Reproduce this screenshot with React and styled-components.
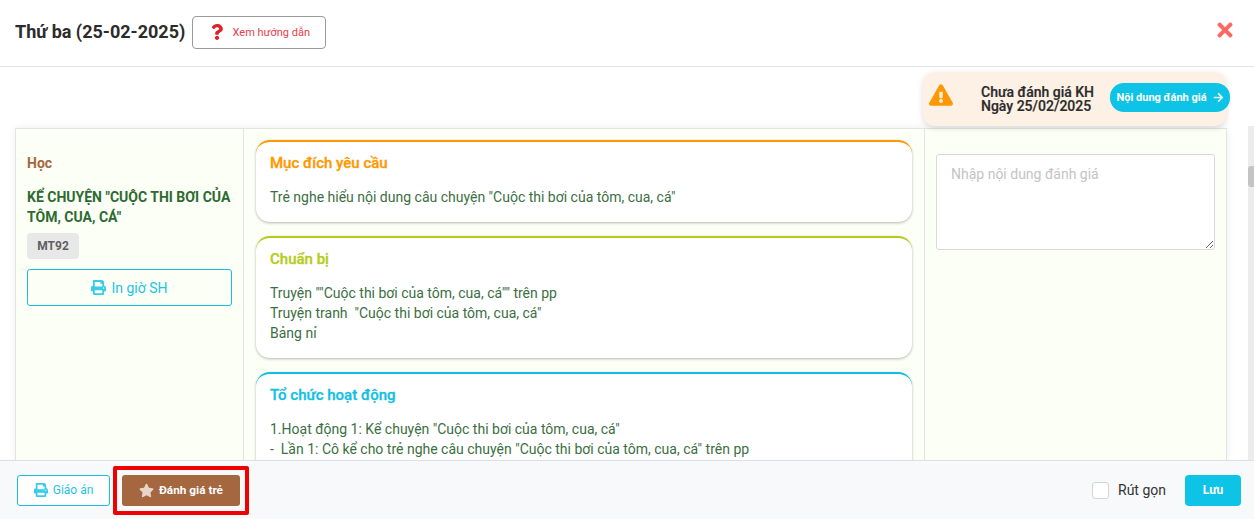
import React from 'react';
import styled, { createGlobalStyle } from 'styled-components';
import {
  FaArrowRight,
  FaExclamationTriangle,
  FaPrint,
  FaQuestion,
  FaStar,
  FaTimes
} from 'react-icons/fa';

const GlobalStyle = createGlobalStyle`
  html, body {
    margin: 0;
    height: 100%;
    overflow: hidden;
    background: #fff;
  }
  * {
    box-sizing: border-box;
  }
`;

const Modal = styled.div`
  width: 1254px;
  height: 519px;
  display: flex;
  flex-direction: column;
  font-family: Roboto, 'Liberation Sans', sans-serif;
  color: #2b2b2b;
  overflow: hidden;
`;

const Header = styled.header`
  height: 67px;
  flex: none;
  display: flex;
  align-items: center;
  padding: 0 18px 2px 15px;
  border-bottom: 1px solid #e2e2e2;
`;

const Title = styled.h1`
  margin: 0 7px 0 0;
  font-size: 18px;
  font-weight: 700;
  line-height: 24px;
`;

const GuideButton = styled.button`
  width: 134px;
  height: 33px;
  display: flex;
  align-items: center;
  justify-content: center;
  gap: 8px;
  padding: 0;
  background: #fff;
  border: 1px solid #9a9a9a;
  border-radius: 4px;
  color: #e8404a;
  font-family: inherit;
  font-size: 11px;
  svg {
    color: #e0202c;
    font-size: 16px;
  }
`;

const CloseButton = styled.span`
  margin-left: auto;
  margin-bottom: 4px;
  display: flex;
  color: #fb6a62;
  font-size: 22px;
`;

const NoticeBar = styled.div`
  height: 61px;
  flex: none;
  position: relative;
`;

const Notice = styled.div`
  position: absolute;
  z-index: 2;
  top: 5px;
  left: 923px;
  width: 303px;
  height: 54px;
  display: flex;
  align-items: center;
  padding-left: 6px;
  background: #fdf1e6;
  border-radius: 12px;
  box-shadow: 0 2px 6px rgba(0, 0, 0, 0.14);
  svg.warn {
    color: #ff9800;
    font-size: 24px;
    flex: none;
    margin-bottom: 8px;
  }
`;

const NoticeText = styled.div`
  margin-left: 28px;
  width: 129px;
  font-size: 14px;
  font-weight: 500;
  -webkit-text-stroke: 0.2px #2b2b2b;
  line-height: 14.5px;
`;

const NoticeLink = styled.button`
  position: absolute;
  left: 187px;
  top: 11px;
  width: 120px;
  height: 29px;
  display: flex;
  align-items: center;
  justify-content: center;
  gap: 6px;
  padding: 0;
  border: 0;
  border-radius: 14px;
  background: #0dc3e6;
  color: #fff;
  font-family: inherit;
  font-size: 11px;
  font-weight: 700;
  white-space: nowrap;
  svg {
    font-size: 11px;
    opacity: 0.85;
  }
`;

const Body = styled.div`
  flex: 1;
  min-height: 0;
  display: flex;
  position: relative;
`;

const Grid = styled.div`
  margin-left: 15px;
  width: 1212px;
  height: 332px;
  display: grid;
  grid-template-columns: 227px 681px 1fr;
  background: #fcfff5;
  border: 1px solid #e4e6dc;
  border-bottom: 0;
  box-shadow: 0 0 8px rgba(0, 0, 0, 0.07);
  overflow: hidden;
`;

const Column = styled.div`
  padding: ${p => p.$padding};
  border-left: ${p => (p.$divided ? '1px solid #e4e6dc' : '0')};
  min-width: 0;
`;

const LessonHeading = styled.h3`
  margin: 0 0 14px;
  color: #a5673f;
  font-size: 14px;
  font-weight: 700;
  line-height: 20px;
`;

const LessonName = styled.div`
  color: #2d6a33;
  font-size: 14px;
  font-weight: 700;
  line-height: 20px;
`;

const Code = styled.span`
  display: block;
  width: 52px;
  height: 26px;
  margin: 6px 0 10px;
  background: #e8e8e8;
  border-radius: 4px;
  color: #5f5f5f;
  font-size: 12px;
  font-weight: 700;
  line-height: 26px;
  text-align: center;
`;

const OutlineButton = styled.button`
  width: ${p => p.$width};
  height: ${p => p.$height};
  display: flex;
  align-items: center;
  justify-content: center;
  gap: 5px;
  padding: 0;
  background: ${p => p.$bg};
  border: 1px solid #16bfe0;
  border-radius: 3px;
  color: #1fc3e6;
  font-family: inherit;
  font-size: ${p => p.$size};
  svg {
    color: #38cbea;
    font-size: ${p => p.$icon};
  }
`;

const Card = styled.section`
  background: #fff;
  border-top: 2px solid ${p => p.$accent};
  border-radius: 14px;
  box-shadow: 0 1px 3px rgba(0, 0, 0, 0.28);
  padding: 11px 14px 15px;
  margin-bottom: 14px;
`;

const CardTitle = styled.h4`
  margin: 0 0 14px;
  color: ${p => p.$accent};
  font-size: 15px;
  font-weight: 500;
  -webkit-text-stroke: 0.3px ${p => p.$accent};
  line-height: 20px;
`;

const CardText = styled.div`
  color: #3b6f42;
  font-size: 14px;
  line-height: 20px;
  white-space: pre-wrap;
`;

const ReviewInput = styled.textarea`
  display: block;
  width: 279px;
  height: 96px;
  padding: 9px 14px;
  border: 1px solid #d9d9d9;
  border-radius: 3px;
  background: #fff;
  font-family: inherit;
  font-size: 14px;
  line-height: 20px;
  &::placeholder {
    color: #c4c4c4;
    opacity: 1;
  }
`;

const ScrollTrack = styled.div`
  position: absolute;
  right: 0;
  top: -2px;
  bottom: 0;
  width: 6px;
  background: #ececec;
`;

const ScrollThumb = styled.div`
  position: absolute;
  top: 40px;
  left: 0;
  width: 6px;
  height: 21px;
  background: #c4c4c4;
  border-radius: 3px 0 0 3px;
`;

const Footer = styled.footer`
  height: 59px;
  flex: none;
  display: flex;
  align-items: center;
  gap: 3px;
  padding: 0 13px 0 17px;
  background: #f8f9fb;
  border-top: 1px solid #dedfe2;
  position: relative;
  z-index: 1;
`;

const Highlight = styled.div`
  padding: 5px;
  border: 4px solid #f00000;
  border-radius: 2px;
`;

const StarButton = styled.button`
  width: 118px;
  height: 31px;
  display: flex;
  align-items: center;
  justify-content: center;
  gap: 5px;
  padding: 0;
  border: 0;
  border-radius: 3px;
  background: #a5673f;
  color: #fff;
  font-family: inherit;
  font-size: 11.8px;
  font-weight: 700;
  svg {
    color: #e8d5c9;
    font-size: 15px;
  }
`;

const CollapseLabel = styled.label`
  margin-left: auto;
  display: flex;
  align-items: center;
  gap: 9px;
  color: #333;
  font-size: 14px;
`;

const CheckBox = styled.span`
  width: 17px;
  height: 17px;
  background: #fff;
  border: 1px solid #d4d4d4;
  border-radius: 3px;
`;

const SaveButton = styled.button`
  width: 56px;
  height: 31px;
  margin-left: 16px;
  padding: 0;
  border: 0;
  border-radius: 4px;
  background: #0dc3e6;
  color: #fff;
  font-family: inherit;
  font-size: 12px;
  font-weight: 700;
`;

const cards = [
  {
    title: 'Mục đích yêu cầu',
    accent: '#ff9800',
    text: 'Trẻ nghe hiểu nội dung câu chuyện "Cuộc thi bơi của tôm, cua, cá"'
  },
  {
    title: 'Chuẩn bị',
    accent: '#b5cc18',
    text: 'Truyện ""Cuộc thi bơi của tôm, cua, cá"" trên pp\nTruyện tranh  "Cuộc thi bơi của tôm, cua, cá"\nBảng nỉ'
  },
  {
    title: 'Tổ chức hoạt động',
    accent: '#12bfe3',
    text: '1.Hoạt động 1: Kể chuyện "Cuộc thi bơi của tôm, cua, cá"\n-  Lần 1: Cô kể cho trẻ nghe câu chuyện "Cuộc thi bơi của tôm, cua, cá" trên pp'
  }
];

export default function App() {
  return (
    <Modal>
      <GlobalStyle />
      <Header>
        <Title>Thứ ba (25-02-2025)</Title>
        <GuideButton>
          <FaQuestion />
          Xem hướng dẫn
        </GuideButton>
        <CloseButton>
          <FaTimes />
        </CloseButton>
      </Header>
      <NoticeBar>
        <Notice>
          <FaExclamationTriangle className="warn" />
          <NoticeText>
            Chưa đánh giá KH
            <br />
            Ngày 25/02/2025
          </NoticeText>
          <NoticeLink>
            Nội dung đánh giá
            <FaArrowRight />
          </NoticeLink>
        </Notice>
      </NoticeBar>
      <Body>
        <Grid>
          <Column $padding="24px 11px 0 11px">
            <LessonHeading>Học</LessonHeading>
            <LessonName>KỂ CHUYỆN "CUỘC THI BƠI CỦA TÔM, CUA, CÁ"</LessonName>
            <Code>MT92</Code>
            <OutlineButton $width="205px" $height="37px" $size="14px" $icon="15px" $bg="transparent">
              <FaPrint />
              In giờ SH
            </OutlineButton>
          </Column>
          <Column $divided $padding="11px 12px 0 12px">
            {cards.map(card => (
              <Card key={card.title} $accent={card.accent}>
                <CardTitle $accent={card.accent}>{card.title}</CardTitle>
                <CardText>{card.text}</CardText>
              </Card>
            ))}
          </Column>
          <Column $divided $padding="25px 11px 0 11px">
            <ReviewInput placeholder="Nhập nội dung đánh giá" />
          </Column>
        </Grid>
        <ScrollTrack>
          <ScrollThumb />
        </ScrollTrack>
      </Body>
      <Footer>
        <OutlineButton $width="93px" $height="31px" $size="12px" $icon="14px" $bg="#fff">
          <FaPrint />
          Giáo án
        </OutlineButton>
        <Highlight>
          <StarButton>
            <FaStar />
            Đánh giá trẻ
          </StarButton>
        </Highlight>
        <CollapseLabel>
          <CheckBox />
          Rút gọn
        </CollapseLabel>
        <SaveButton>Lưu</SaveButton>
      </Footer>
    </Modal>
  );
}
